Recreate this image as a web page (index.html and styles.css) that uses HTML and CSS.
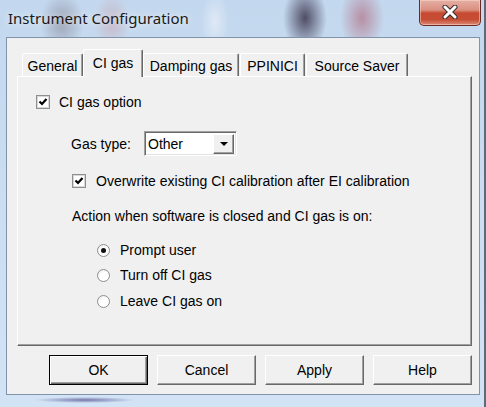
FILE: index.html
```html
<!DOCTYPE html>
<html>
<head>
<meta charset="utf-8">
<title>Instrument Configuration</title>
<link rel="stylesheet" href="styles.css">
</head>
<body>
<div class="frame">
  <div class="titlebar">
    <span class="title">Instrument Configuration</span>
    <div class="close">
      <svg width="18" height="14" viewBox="0 0 18 14">
        <path d="M4 2 L14 12 M14 2 L4 12" stroke="#3b2a2a" stroke-width="5" stroke-linecap="round"/>
        <path d="M4 2 L14 12 M14 2 L4 12" stroke="#ffffff" stroke-width="3" stroke-linecap="round"/>
      </svg>
    </div>
  </div>
  <div class="client">
    <div class="tabs">
      <div class="tab t-general">General</div>
      <div class="tab active t-ci">CI gas</div>
      <div class="tab t-damp">Damping gas</div>
      <div class="tab t-pp">PPINICI</div>
      <div class="tab t-ss">Source Saver</div>
    </div>
    <div class="panel">
      <div class="row r-option">
        <span class="check"><svg width="10" height="10" viewBox="0 0 10 10"><path d="M1.5 4.5 L4 7 L8.5 2" fill="none" stroke="#000" stroke-width="2.2"/></svg></span>
        <span class="label">CI gas option</span>
      </div>
      <div class="row r-gas">
        <span class="gas-label">Gas type:</span>
        <div class="combo">
          <span class="combo-text">Other</span>
          <span class="combo-btn"><span class="arrow"></span></span>
        </div>
      </div>
      <div class="row r-overwrite">
        <span class="check"><svg width="10" height="10" viewBox="0 0 10 10"><path d="M1.5 4.5 L4 7 L8.5 2" fill="none" stroke="#000" stroke-width="2.2"/></svg></span>
        <span class="label">Overwrite existing CI calibration after EI calibration</span>
      </div>
      <div class="row r-action">Action when software is closed and CI gas is on:</div>
      <div class="row r-radio r-prompt">
        <span class="radio on"><span class="dot"></span></span>
        <span class="label">Prompt user</span>
      </div>
      <div class="row r-radio r-turn">
        <span class="radio"></span>
        <span class="label">Turn off CI gas</span>
      </div>
      <div class="row r-radio r-leave">
        <span class="radio"></span>
        <span class="label">Leave CI gas on</span>
      </div>
    </div>
    <div class="buttons">
      <div class="btn default">OK</div>
      <div class="btn">Cancel</div>
      <div class="btn">Apply</div>
      <div class="btn">Help</div>
    </div>
  </div>
</div>
</body>
</html>
```
FILE: styles.css
```css
* { box-sizing: border-box; }
html, body { margin: 0; padding: 0; }
body {
  width: 486px;
  height: 407px;
  overflow: hidden;
  font-family: "Liberation Sans", Arial, sans-serif;
  font-size: 14px;
  color: #000;
  background: #cfe0f2;
}
.frame {
  width: 486px;
  height: 407px;
  border-right: 2px solid #5c6b7c;
  background:
    radial-gradient(ellipse 22px 30px at 62px 22px, rgba(110,100,115,.45), transparent),
    radial-gradient(ellipse 18px 30px at 112px 22px, rgba(205,150,160,.45), transparent),
    radial-gradient(ellipse 22px 34px at 305px 18px, rgba(40,30,55,.75), transparent),
    radial-gradient(ellipse 22px 34px at 362px 18px, rgba(175,95,115,.6), transparent),
    radial-gradient(ellipse 14px 30px at 215px 22px, rgba(235,240,250,.7), transparent),
    radial-gradient(ellipse 50px 3px at 85px 400px, rgba(55,45,120,.6), transparent),
    linear-gradient(#c3d8ee, #d2e3f5);
}
.titlebar {
  height: 37px;
  display: flex;
  justify-content: space-between;
  align-items: flex-start;
  padding: 0 3px 0 8px;
}
.title {
  margin-top: 8px;
  font-family: "Noto Sans", "Open Sans", sans-serif;
  font-size: 15px;
  color: #1a1a1a;
  letter-spacing: 0px;
  text-shadow: 0 0 6px rgba(255,255,255,.9);
}
.close {
  width: 62px;
  height: 26px;
  border: 1px solid #6b2a22;
  border-top: none;
  border-radius: 0 0 5px 5px;
  background: linear-gradient(#e6b0a6 0%, #d98f80 40%, #c74a31 52%, #c64d35 78%, #db8a76 100%);
  box-shadow: inset 0 0 0 1px rgba(255,220,210,.5);
  display: flex;
  align-items: center;
  justify-content: center;
  padding-bottom: 1px;
}
.client {
  margin: 0 4px 0 6px;
  height: 358px;
  border: 1px solid #8193aa;
  background: #f0f0f0;
}
.tabs {
  margin-top: 11px;
  padding-left: 15px;
  height: 28px;
  display: flex;
  align-items: flex-end;
  position: relative;
  z-index: 1;
}
.tab {
  height: 23px;
  margin-bottom: 1px;
  background: #f0f0f0;
  border-top: 1px solid #ffffff;
  border-left: 1px solid #ffffff;
  border-right: 1px solid #696969;
  box-shadow: inset -1px 0 0 #a0a0a0;
  border-radius: 2px 2px 0 0;
  display: flex;
  align-items: center;
  justify-content: center;
  padding-top: 1px;
  white-space: nowrap;
}
.tab.active {
  height: 28px;
  margin-bottom: 0;
  padding-top: 0;
  padding-bottom: 2px;
}
.t-general { width: 61px; }
.t-ci { width: 60px; }
.t-damp { width: 96px; }
.t-pp { width: 65px; margin-left: 1px; }
.t-ss { width: 102px; margin-left: 1px; }
.panel {
  margin: -1px 0 0 10px;
  width: 455px;
  height: 270px;
  border-top: 1px solid #ffffff;
  border-left: 1px solid #ffffff;
  border-right: 1px solid #696969;
  border-bottom: 1px solid #696969;
  box-shadow: inset -1px -1px 0 #a0a0a0;
  padding-left: 18px;
  padding-top: 1px;
}
.row {
  height: 20px;
  display: flex;
  align-items: center;
  white-space: nowrap;
}
.r-option { margin-top: 14px; }
.r-gas { margin-top: 19px; height: 25px; padding-left: 35px; }
.r-overwrite { margin-top: 15px; padding-left: 36px; }
.r-action { margin-top: 15px; padding-left: 36px; }
.r-radio { padding-left: 61px; }
.r-prompt { margin-top: 14px; }
.r-turn { margin-top: 5px; }
.r-leave { margin-top: 6px; }
.check {
  width: 14px;
  height: 14px;
  border: 1px solid #8e8f8f;
  background: #ffffff;
  box-shadow: inset 0 0 0 1px #d8d8d8;
  display: flex;
  align-items: center;
  justify-content: center;
  margin-right: 9px;
  flex: none;
}
.r-overwrite .check { margin-right: 10px; }
.radio {
  width: 13px;
  height: 13px;
  border-radius: 50%;
  border: 1px solid #8e8f8f;
  background: radial-gradient(circle at 60% 65%, #ffffff 45%, #e6e6e6 100%);
  display: flex;
  align-items: center;
  justify-content: center;
  margin-right: 10px;
  flex: none;
}
.dot {
  width: 5px;
  height: 5px;
  border-radius: 50%;
  background: #111;
}
.gas-label { width: 73px; }
.combo {
  width: 93px;
  height: 25px;
  border-top: 1px solid #a0a0a0;
  border-left: 1px solid #a0a0a0;
  border-right: 1px solid #ffffff;
  border-bottom: 1px solid #ffffff;
  box-shadow: inset 1px 1px 0 #696969, inset -1px -1px 0 #e3e3e3;
  background: #ffffff;
  display: flex;
  align-items: center;
  padding: 2px 2px 2px 3px;
}
.combo-text { flex: 1; padding-top: 1px; }
.combo-btn {
  width: 21px;
  height: 20px;
  background: #f0f0f0;
  border-top: 1px solid #ffffff;
  border-left: 1px solid #ffffff;
  border-right: 1px solid #696969;
  border-bottom: 1px solid #696969;
  box-shadow: inset -1px -1px 0 #a0a0a0;
  display: flex;
  align-items: center;
  justify-content: center;
}
.arrow {
  width: 0;
  height: 0;
  border-left: 4px solid transparent;
  border-right: 4px solid transparent;
  border-top: 4px solid #000;
}
.buttons {
  margin-top: 9px;
  padding-left: 42px;
  display: flex;
  gap: 9px;
}
.btn {
  width: 99px;
  height: 30px;
  background: #f0f0f0;
  border-top: 1px solid #ffffff;
  border-left: 1px solid #ffffff;
  border-right: 1px solid #696969;
  border-bottom: 1px solid #696969;
  box-shadow: inset -1px -1px 0 #a0a0a0;
  display: flex;
  align-items: center;
  justify-content: center;
}
.btn.default {
  border: 1px solid #000;
  box-shadow: inset 1px 1px 0 #ffffff, inset -1px -1px 0 #696969, inset -2px -2px 0 #a0a0a0;
}
```
